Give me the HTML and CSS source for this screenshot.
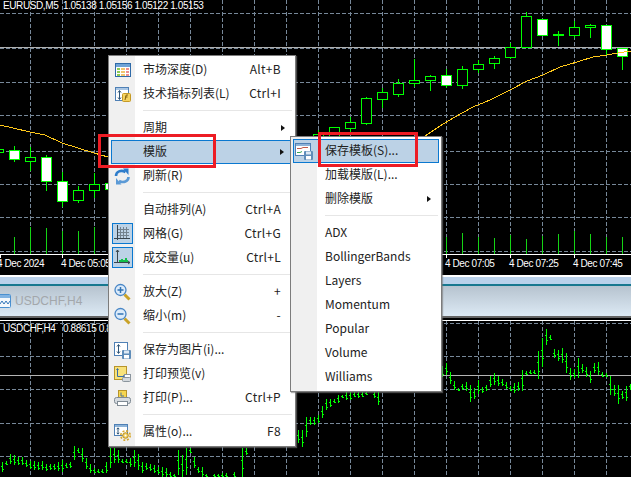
FILE: index.html
```html
<!DOCTYPE html>
<html lang="zh-CN">
<head>
  <meta charset="UTF-8" />
  <title>EURUSD,M5</title>
  <link rel="stylesheet" href="styles.css">
</head>
<body>
  <svg class="icon-defs" aria-hidden="true">
    <symbol id="i-table" viewBox="0 0 18 18">
      <rect x="2.5" y="2.5" width="15" height="13" fill="#fff" stroke="#2f6aa8"/>
      <rect x="3" y="3" width="14" height="3" fill="#6fa3d6"/>
      <rect x="4" y="7" width="3" height="2" fill="#8ecb55"/><rect x="4" y="10" width="3" height="2" fill="#8ecb55"/><rect x="4" y="13" width="3" height="2" fill="#8ecb55"/>
      <rect x="8" y="7" width="4" height="2" fill="#f2c56f"/><rect x="8" y="10" width="4" height="2" fill="#f2c56f"/><rect x="8" y="13" width="4" height="2" fill="#f2c56f"/>
      <rect x="13" y="7" width="3" height="2" fill="#ee8f8f"/><rect x="13" y="10" width="3" height="2" fill="#ee8f8f"/><rect x="13" y="13" width="3" height="2" fill="#ee8f8f"/>
    </symbol>
    <symbol id="i-indicator" viewBox="0 0 18 18">
      <rect x="2.5" y="2.5" width="13" height="13" fill="#fff" stroke="#4f80b5"/>
      <rect x="3" y="3" width="12" height="2" fill="#a9c6e4"/>
      <path d="M6.5 6v8M5 7.5l1.5-2 1.5 2M5 12.5l1.5 2 1.5-2" fill="none" stroke="#2f5578"/>
      <rect x="9.5" y="8.5" width="8" height="8" rx="1" fill="#f5d25f" stroke="#c59a25"/>
      <path d="M12 15l1.2-5h1.8M12 12h2.5" fill="none" stroke="#80600f"/>
    </symbol>
    <symbol id="i-refresh" viewBox="0 0 18 18">
      <path d="M3 9C3 4.5 8 2.5 12.5 5" fill="none" stroke="#2f7dcb" stroke-width="2.6"/>
      <path d="M10 1.5h5.5V8z" fill="#2f7dcb"/>
      <path d="M15.5 10c0 4.5-5 6.300-9.500 4" fill="none" stroke="#5b9ad6" stroke-width="2.6"/>
      <path d="M8.500 17.500H3V11z" fill="#5b9ad6"/>
    </symbol>
    <symbol id="i-grid" viewBox="0 0 18 18">
      <path d="M7.500 3v11M10.500 3v11M13.500 3v11M4 5.500h12M4 8.500h12M4 11.500h12" fill="none" stroke="#74838f"/>
      <path d="M4.500 1v15M1 14.500h16" fill="none" stroke="#39464f"/>
    </symbol>
    <symbol id="i-volume" viewBox="0 0 18 18">
      <path d="M6 12h9v2H6zM8 11h2v1H8zM12 10h2v2h-2z" fill="#12c04a"/>
      <path d="M4.500 2v13M1 14.500h16M3 4l1.500-2L6 4M15 13l2 1.500-2 1.500" fill="none" stroke="#39464f"/>
    </symbol>
    <symbol id="i-zoom-in" viewBox="0 0 18 18">
      <path d="M11.500 11.500l5 5" stroke="#c9a227" stroke-width="3"/>
      <circle cx="7.500" cy="7" r="5.500" fill="#dcebfa" stroke="#4a87c6" stroke-width="1.300"/>
      <path d="M4.500 7h6M7.500 4v6" stroke="#3073b4" stroke-width="1.500"/>
    </symbol>
    <symbol id="i-zoom-out" viewBox="0 0 18 18">
      <path d="M11.500 11.500l5 5" stroke="#c9a227" stroke-width="3"/>
      <circle cx="7.500" cy="7" r="5.500" fill="#dcebfa" stroke="#4a87c6" stroke-width="1.300"/>
      <path d="M4.500 7h6" stroke="#3073b4" stroke-width="1.500"/>
    </symbol>
    <symbol id="i-save-image" viewBox="0 0 18 18">
      <rect x="1.500" y="1.500" width="13" height="13" fill="#fff" stroke="#4f80b5"/>
      <path d="M5.500 4v8M4 5.500l1.500-2 1.500 2M4 10.500l1.500 2 1.500-2" fill="none" stroke="#2f5578"/>
      <rect x="9" y="9" width="9" height="9" rx="1" fill="#5f8db9"/>
      <rect x="11" y="9.500" width="5" height="3" fill="#dce8f3"/>
      <rect x="11" y="14" width="5" height="3.500" fill="#fff"/>
    </symbol>
    <symbol id="i-preview" viewBox="0 0 18 18">
      <rect x="1.500" y="1.500" width="12" height="13" fill="#f8e27a" stroke="#b7942a"/>
      <path d="M4.500 4v7.500h7M3.500 5l1-1.500 1 1.500M10 10.500l1.500 1-1.500 1" fill="none" stroke="#3a6ea5"/>
      <rect x="11.500" y="9.500" width="6" height="4" fill="#fff" stroke="#8b959d"/>
      <rect x="9.500" y="12.500" width="8" height="4" rx="1" fill="#d3d8dc" stroke="#8b959d"/>
    </symbol>
    <symbol id="i-print" viewBox="0 0 18 18">
      <rect x="5.500" y="1.500" width="8" height="8" fill="#f6d650" stroke="#b7942a"/>
      <path d="M8 3.500V7h3" fill="none" stroke="#4a7096"/>
      <rect x="1.500" y="8.500" width="16" height="6" rx="2" fill="#d6dbe0" stroke="#7f8a94"/>
      <rect x="4.500" y="12.500" width="10" height="4" fill="#fff" stroke="#7f8a94"/>
    </symbol>
    <symbol id="i-props" viewBox="0 0 18 18">
      <rect x="1.500" y="1.500" width="13" height="11" fill="#fff" stroke="#4f80b5"/>
      <rect x="2" y="2" width="12" height="2" fill="#8db3d8"/>
      <path d="M5 5v6M3.800 6.200L5 4.800l1.200 1.400M3.800 9.800L5 11.200l1.200-1.400" fill="none" stroke="#2f5578"/>
      <circle cx="12.500" cy="12.500" r="4.700" fill="none" stroke="#d8a82c" stroke-width="1.600" stroke-dasharray="2 1.700"/>
      <circle cx="12.500" cy="12.500" r="2.800" fill="#f0cf63" stroke="#b98f1f"/>
      <circle cx="12.500" cy="12.500" r="1" fill="#fff"/>
    </symbol>
    <symbol id="i-template" viewBox="0 0 18 18">
      <rect x="0.500" y="1.500" width="15" height="12" fill="#fff" stroke="#4f80b5"/>
      <rect x="1" y="2" width="14" height="2" fill="#8db3d8"/>
      <path d="M2 6.500h4l2-1h5" fill="none" stroke="#c05a4a"/>
      <path d="M2 10.500h3l2-1" fill="none" stroke="#3aa655"/>
      <rect x="9" y="9" width="9" height="9" rx="1" fill="#5f8db9"/>
      <rect x="11" y="9.500" width="5" height="3" fill="#dce8f3"/>
      <rect x="11" y="14" width="5" height="3.500" fill="#fff"/>
    </symbol>
  </svg>

  <div class="terminal">
    <section class="chart chart-top">
      <svg class="chart-svg" viewBox="0 0 631 275" width="631" height="275">
        <g id="top-plot"></g>
        <text class="chart-text" x="3" y="9">EURUSD,M5</text>
        <text class="chart-text" x="63" y="9">1.05138 1.05156 1.05122 1.05153</text>
        <text class="chart-text" x="-3" y="267">4 Dec 2024</text>
        <text class="chart-text" x="61" y="267">4 Dec 05:05</text>
        <text class="chart-text" x="445" y="267">4 Dec 07:05</text>
        <text class="chart-text" x="509" y="267">4 Dec 07:25</text>
        <text class="chart-text" x="573" y="267">4 Dec 07:45</text>
      </svg>
    </section>

    <div class="window-gap">
      <div class="title-strip"></div>
      <div class="tab-row">
        <svg class="tab-icon" viewBox="0 0 11 14" width="11" height="14">
          <rect x="-4.500" y="0.500" width="15" height="13" rx="1" fill="#f4f8fc" stroke="#4a90d0"/>
          <rect x="-4" y="1" width="14" height="3" fill="#7fb2e2"/>
          <path d="M0 10l2-3 2 3 2-3 2 3 2-3" fill="none" stroke="#3577b8"/>
        </svg>
        <span class="tab-title">USDCHF,H4</span>
      </div>
      <div class="tab-edge"></div>
    </div>

    <section class="chart chart-bottom">
      <svg class="chart-svg" viewBox="0 320 631 157" width="631" height="157">
        <g id="bottom-plot"></g>
        <text class="chart-text" x="3" y="332">USDCHF,H4</text>
        <text class="chart-text" x="63" y="332">0.88615 0.88680 0.88502 0.88540</text>
      </svg>
    </section>

    <!-- chart context menu -->
    <div class="menu main-menu">
      <div class="menu-item"><svg class="menu-icon"><use href="#i-table"/></svg><span class="menu-label">市场深度(D)</span><span class="menu-key">Alt+B</span></div>
      <div class="menu-item"><svg class="menu-icon"><use href="#i-indicator"/></svg><span class="menu-label">技术指标列表(L)</span><span class="menu-key">Ctrl+I</span></div>
      <div class="menu-sep"></div>
      <div class="menu-item has-arrow"><span class="menu-label">周期</span></div>
      <div class="menu-item has-arrow active"><span class="menu-label">模版</span></div>
      <div class="menu-item"><svg class="menu-icon"><use href="#i-refresh"/></svg><span class="menu-label">刷新(R)</span></div>
      <div class="menu-sep"></div>
      <div class="menu-item"><span class="menu-label">自动排列(A)</span><span class="menu-key">Ctrl+A</span></div>
      <div class="menu-item"><span class="menu-check"><svg class="menu-icon"><use href="#i-grid"/></svg></span><span class="menu-label">网格(G)</span><span class="menu-key">Ctrl+G</span></div>
      <div class="menu-item"><span class="menu-check"><svg class="menu-icon"><use href="#i-volume"/></svg></span><span class="menu-label">成交量(u)</span><span class="menu-key">Ctrl+L</span></div>
      <div class="menu-sep"></div>
      <div class="menu-item"><svg class="menu-icon"><use href="#i-zoom-in"/></svg><span class="menu-label">放大(Z)</span><span class="menu-key">+</span></div>
      <div class="menu-item"><svg class="menu-icon"><use href="#i-zoom-out"/></svg><span class="menu-label">缩小(m)</span><span class="menu-key">-</span></div>
      <div class="menu-sep"></div>
      <div class="menu-item"><svg class="menu-icon"><use href="#i-save-image"/></svg><span class="menu-label">保存为图片(i)...</span></div>
      <div class="menu-item"><svg class="menu-icon"><use href="#i-preview"/></svg><span class="menu-label">打印预览(v)</span></div>
      <div class="menu-item"><svg class="menu-icon"><use href="#i-print"/></svg><span class="menu-label">打印(P)...</span><span class="menu-key">Ctrl+P</span></div>
      <div class="menu-sep"></div>
      <div class="menu-item"><svg class="menu-icon"><use href="#i-props"/></svg><span class="menu-label">属性(o)...</span><span class="menu-key">F8</span></div>
    </div>

    <div class="menu sub-menu">
      <div class="menu-item active"><svg class="menu-icon"><use href="#i-template"/></svg><span class="menu-label">保存模板(S)...</span></div>
      <div class="menu-item"><span class="menu-label">加载模版(L)...</span></div>
      <div class="menu-item has-arrow"><span class="menu-label">删除模版</span></div>
      <div class="menu-sep"></div>
      <div class="menu-item"><span class="menu-label">ADX</span></div>
      <div class="menu-item"><span class="menu-label">BollingerBands</span></div>
      <div class="menu-item"><span class="menu-label">Layers</span></div>
      <div class="menu-item"><span class="menu-label">Momentum</span></div>
      <div class="menu-item"><span class="menu-label">Popular</span></div>
      <div class="menu-item"><span class="menu-label">Volume</span></div>
      <div class="menu-item"><span class="menu-label">Williams</span></div>
    </div>

    <!-- red annotation boxes -->
    <div class="callout callout-template"></div>
    <div class="callout callout-save"></div>
  </div>

  <script src="chart.js"></script>
</body>
</html>
```

FILE: styles.css
```css
html, body {
  margin: 0;
  padding: 0;
  background: #000;
}

.icon-defs {
  display: none;
}

.terminal {
  position: relative;
  width: 631px;
  height: 477px;
  overflow: hidden;
  background: #000;
}

.chart-top {
  height: 275px;
}

.chart-bottom {
  height: 157px;
}

.chart-svg {
  display: block;
  shape-rendering: crispEdges;
}

.chart-text {
  font-family: "Liberation Sans", sans-serif;
  font-size: 10px;
  letter-spacing: -0.4px;
  fill: #fff;
}

/* Strip between the two chart windows */
.window-gap {
  height: 45px;
  border-top: 2px solid #fff;
  box-sizing: border-box;
  background: #000;
}

.title-strip {
  height: 7px;
  background: #b9d1ea;
  border-bottom: 2px solid #17788f;
}

.tab-row {
  display: flex;
  align-items: center;
  gap: 4px;
  height: 30px;
  background: linear-gradient(#b6c3cf, #dce9f4);
}

.tab-icon {
  flex: none;
}

.tab-title {
  font-family: "Liberation Sans", sans-serif;
  font-size: 12px;
  color: #a3a7ab;
}

.tab-edge {
  height: 2px;
  background: #646464;
}

/* Context menus */
.menu {
  position: absolute;
  box-sizing: border-box;
  padding: 2px 0;
  border: 1px solid #7c7c7c;
  box-shadow: 1px 1px 1px rgba(120, 120, 120, 0.6);
  background: linear-gradient(90deg, #f0f0f0 26px, #fff 26px);
  font-family: "Noto Sans CJK SC", "Noto Sans", sans-serif;
  font-size: 12px;
  color: #222;
}

.main-menu {
  left: 108px;
  top: 55px;
  width: 188px;
  height: 392px;
}

.sub-menu {
  left: 290px;
  top: 136px;
  width: 152px;
  height: 256px;
}

.menu-item {
  position: relative;
  display: flex;
  align-items: center;
  box-sizing: border-box;
  height: 24px;
  padding: 0 14px 3px 34px;
}

.menu-item.active {
  margin: 0 2px;
  padding-left: 31px;
  border: 1px solid #0a78d0;
  background: #bcd2e6;
}

.menu-label {
  white-space: nowrap;
}

.menu-key {
  margin-left: auto;
  letter-spacing: 0.3px;
}

.menu-icon {
  position: absolute;
  left: 4px;
  top: 3px;
  width: 18px;
  height: 18px;
}

.menu-item.active .menu-icon {
  left: 1px;
  top: 2px;
}

.menu-check {
  position: absolute;
  left: 3px;
  top: 1px;
  width: 21px;
  height: 21px;
  box-sizing: border-box;
  border: 1px solid #0a78d0;
  background: #bcd2e6;
}

.menu-check .menu-icon {
  left: 0;
  top: 0;
}

.has-arrow::after {
  content: "";
  position: absolute;
  right: 10px;
  top: 9px;
  border-left: 4px solid #111;
  border-top: 3px solid transparent;
  border-bottom: 3px solid transparent;
}

.menu-item.active.has-arrow::after {
  right: 8px;
  top: 8px;
}

.menu-sep {
  height: 1px;
  margin: 4px 3px 5px 34px;
  background: #e6e6e6;
}

/* Red annotation boxes */
.callout {
  position: absolute;
  box-sizing: border-box;
  border: 3px solid #ed1c24;
}

.callout-template {
  left: 98px;
  top: 134px;
  width: 118px;
  height: 34px;
}

.callout-save {
  left: 318px;
  top: 132px;
  width: 100px;
  height: 35px;
}
```

FILE: chart.js
```js
(function () {
  const NS = 'http://www.w3.org/2000/svg';
  const GRID = '#778899';
  const GREEN = '#00ff00';

  // x, high, box top, box bottom, low, filled white
  const candles = [
    [-2, 147, 149, 152, 155, 0], [14, 146, 150, 159, 161, 1], [30, 147, 157, 161, 170, 0],
    [46, 155, 157, 181, 190, 1], [62, 172, 181, 201, 206, 1], [78, 186, 190, 200, 202, 0],
    [94, 173, 184, 190, 197, 0], [110, 180, 183, 189, 192, 1], [318, 130, 134, 145, 150, 0],
    [334, 127, 127, 140, 144, 0], [350, 117, 122, 128, 133, 0], [366, 97, 98, 123, 124, 0],
    [382, 88, 92, 99, 107, 0], [398, 79, 83, 94, 96, 0], [414, 59, 80, 83, 86, 0],
    [430, 75, 76, 80, 90, 0], [446, 69, 75, 85, 87, 1], [462, 66, 69, 85, 88, 0],
    [478, 60, 64, 69, 72, 0], [494, 56, 58, 63, 68, 0], [510, 43, 47, 57, 58, 0],
    [526, 12, 16, 47, 47, 0], [542, 19, 19, 35, 35, 1], [558, 31, 34, 35, 45, 0],
    [574, 21, 27, 35, 37, 0], [590, 24, 25, 27, 37, 0], [606, 25, 25, 49, 55, 1],
    [622, 48, 48, 56, 69, 1]
  ];

  const volumes = [
    [14, 237], [30, 227], [46, 228], [62, 231], [78, 231], [94, 227],
    [446, 237], [462, 233], [478, 237], [494, 238], [510, 235], [526, 239],
    [542, 236], [558, 234], [574, 231], [590, 234], [606, 237], [622, 237]
  ];

  const maLine = '0,125 30,132 45,135 62,143 94,153 108,157 425,136 443,124 462,113 473,107 ' +
    '490,100 510,90 527,81 543,75 560,67 577,62 593,57 607,55 618,53 631,51';

  // x, top, bottom of each H4 bar
  const bars = [
    [2, 462, 472], [6, 461, 465], [10, 454, 464], [14, 455, 465], [18, 457, 465], [22, 457, 465],
    [26, 460, 467], [30, 461, 469], [34, 461, 470], [38, 462, 470], [42, 461, 470], [46, 464, 471],
    [50, 464, 470], [54, 464, 470], [58, 462, 471], [62, 460, 472], [66, 463, 468], [70, 462, 468],
    [74, 446, 460], [78, 448, 453], [82, 448, 462], [86, 458, 469], [90, 464, 473], [94, 468, 473],
    [98, 469, 473], [102, 469, 473], [106, 462, 473], [110, 448, 468], [114, 448, 463], [118, 450, 463],
    [122, 459, 463], [126, 459, 463], [130, 458, 467], [134, 450, 467], [138, 454, 470], [142, 462, 473],
    [146, 463, 470], [150, 464, 471], [154, 465, 473], [158, 467, 474], [162, 467, 477], [166, 468, 477],
    [170, 472, 477], [174, 474, 477], [178, 450, 475], [182, 455, 477], [186, 448, 475], [190, 448, 453],
    [194, 457, 468], [198, 467, 473], [202, 467, 477], [206, 474, 477], [214, 474, 477], [218, 474, 477],
    [222, 473, 477], [226, 473, 477], [234, 472, 477], [242, 448, 477], [246, 448, 455],
    [298, 430, 443], [302, 430, 447], [306, 417, 437], [310, 417, 425], [314, 417, 425], [318, 415, 423],
    [322, 406, 418], [326, 399, 410], [330, 399, 407], [334, 399, 403], [338, 395, 403], [342, 395, 398],
    [346, 392, 400], [350, 392, 400], [354, 392, 397], [358, 392, 398], [362, 392, 397], [366, 392, 395],
    [374, 392, 398], [378, 392, 405],
    [442, 366, 377], [446, 363, 375], [450, 372, 384], [454, 381, 390], [458, 388, 391], [462, 384, 390],
    [466, 382, 391], [470, 385, 402], [474, 388, 399], [478, 380, 394], [482, 387, 393], [486, 385, 391],
    [490, 376, 387], [494, 373, 385], [498, 376, 386], [502, 379, 386], [506, 382, 389], [510, 386, 391],
    [514, 383, 393], [518, 382, 391], [522, 370, 391], [526, 371, 375], [530, 370, 374], [534, 370, 374],
    [538, 351, 379], [542, 338, 367], [546, 329, 345], [550, 335, 340], [554, 349, 358], [558, 350, 361],
    [562, 348, 363], [566, 353, 373], [570, 368, 380], [574, 369, 378], [578, 358, 378], [582, 364, 373],
    [586, 367, 377], [590, 371, 383], [594, 363, 373], [598, 362, 375], [602, 372, 377], [606, 373, 377],
    [610, 376, 395], [614, 385, 396], [618, 385, 404], [622, 391, 399], [626, 386, 401], [630, 384, 390]
  ];

  function add(parent, tag, attrs) {
    const el = document.createElementNS(NS, tag);
    Object.keys(attrs).forEach((key) => el.setAttribute(key, attrs[key]));
    parent.appendChild(el);
    return el;
  }

  function line(parent, d, stroke, dash) {
    const attrs = { d: d, stroke: stroke, fill: 'none' };
    if (dash) attrs['stroke-dasharray'] = dash;
    return add(parent, 'path', attrs);
  }

  function drawGrid(parent, rows, top, bottom) {
    let d = '';
    for (let x = 30; x < 631; x += 32) d += `M${x + 0.5} ${top}V${bottom}`;
    rows.forEach((y) => { d += `M0 ${y + 0.5}H631`; });
    line(parent, d, GRID, '4 2');
  }

  // Top chart: EURUSD candles, moving average and volume
  const top = document.getElementById('top-plot');
  drawGrid(top, [13, 48, 82, 115, 151, 184, 217, 251], 0, 254);
  line(top, 'M0 47.5H631', '#b0b0b0');

  let vols = '';
  volumes.forEach(([x, y]) => { vols += `M${x + 0.5} ${y}V254`; });
  line(top, vols, '#14d414');

  let wicks = '';
  candles.forEach(([x, high, , , low]) => { wicks += `M${x + 0.5} ${high}V${low + 1}`; });
  line(top, wicks, GREEN);

  candles.forEach(([x, , boxTop, boxBottom, , white]) => {
    add(top, 'rect', {
      x: x - 4.5,
      y: boxTop + 0.5,
      width: 10,
      height: boxBottom - boxTop,
      fill: white ? '#fff' : '#000',
      stroke: GREEN
    });
  });

  add(top, 'polyline', { points: maLine, fill: 'none', stroke: '#ffc81a' });

  line(top, 'M0 254.500H631M0.500 254V258M62.500 254V258M446.500 254V258M510.500 254V258M574.500 254V258', '#fff');

  // Bottom chart: USDCHF bars
  const bottom = document.getElementById('bottom-plot');
  drawGrid(bottom, [323, 356, 389, 423, 456], 321, 477);
  line(bottom, 'M0 320.500H631', '#fff');
  line(bottom, 'M0 375.500H631', '#b4b4b4');

  let d = '';
  bars.forEach(([x, y1, y2]) => {
    const h = y2 - y1;
    const open = y1 + Math.round(h * 0.4);
    const close = y1 + Math.round(h * 0.7);
    d += `M${x + 0.5} ${y1}V${y2}M${x - 1} ${open + 0.5}H${x}M${x + 1} ${close + 0.5}H${x + 2}`;
  });
  line(bottom, d, GREEN);
})();
```
